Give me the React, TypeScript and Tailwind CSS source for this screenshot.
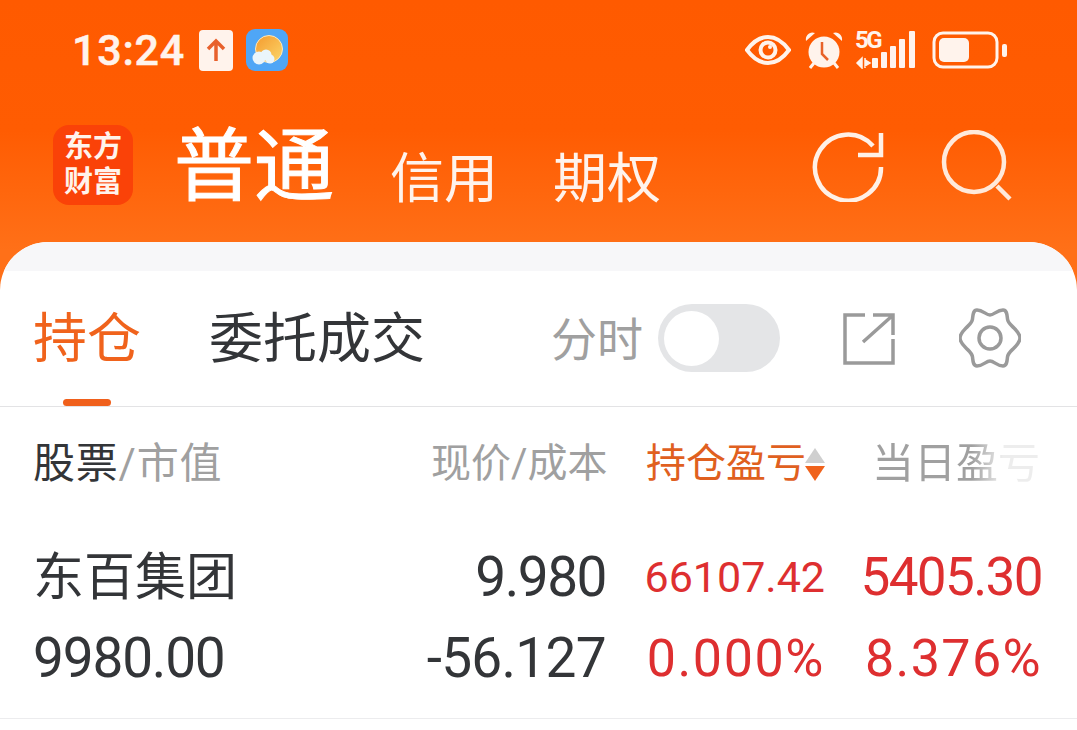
const cjk = "font-['Roboto','Noto_Sans_CJK_SC',sans-serif]"

function StatusBar() {
  return (
    <div className="flex h-[100px] items-center justify-between pl-[72px] pr-[69px] text-[#fff3ec]">
      <div className="flex items-center">
        <span className="w-[127px] text-[43px] leading-none font-medium tracking-[0.8px] [-webkit-text-stroke:0.5px_#fff3ec]">13:24</span>
        <svg width="34" height="41" viewBox="0 0 34 41">
          <rect width="34" height="41" rx="4" fill="#fff3ec" />
          <path d="M17 31V11M9 19l8-8 8 8" fill="none" stroke="#e8602c" strokeWidth="3.500" />
        </svg>
        <svg width="42" height="42" viewBox="0 0 42 42" className="ml-[13px]">
          <defs>
            <linearGradient id="sun" x1="0" y1="0" x2="1" y2="1">
              <stop offset="0" stopColor="#f59a2e" />
              <stop offset="1" stopColor="#fbd76a" />
            </linearGradient>
          </defs>
          <rect width="42" height="42" rx="9" fill="#4fa6f6" />
          <circle cx="23" cy="20" r="13.500" fill="url(#sun)" stroke="#fde9bf" strokeWidth="1" />
          <circle cx="13" cy="29" r="6.500" fill="#eaf5fb" />
          <circle cx="20" cy="26" r="5.500" fill="#eaf5fb" />
          <circle cx="24" cy="30" r="4.500" fill="#eaf5fb" />
        </svg>
      </div>
      <div className="flex items-center">
        <svg width="46" height="30" viewBox="0 0 46 30">
          <path d="M2 15C10 4 17 2 23 2s13 2 21 13c-8 11-15 13-21 13S10 26 2 15z" fill="none" stroke="#fff3ec" strokeWidth="4" />
          <circle cx="23" cy="15" r="7.500" fill="none" stroke="#fff3ec" strokeWidth="4" />
          <circle cx="25" cy="12" r="2" fill="#fff3ec" />
        </svg>
        <svg width="38" height="38" viewBox="0 0 38 38" className="ml-[14px]">
          <circle cx="19" cy="21" r="15.500" fill="#fff3ec" />
          <path d="M1 10C0 4 5 0 10 2zM37 10c1-6-4-10-9-8z" fill="#fff3ec" />
          <path d="M9 32l-4 5M29 32l4 5" stroke="#fff3ec" strokeWidth="3" />
          <path d="M17 11v12l6 6" fill="none" stroke="#e8622a" strokeWidth="2.500" />
        </svg>
        <div className="relative ml-[12px] h-[38px] w-[62px]">
          <span className="absolute top-[-4px] left-0 text-[24px] leading-[26px] font-bold tracking-[-2.5px]">5G</span>
          <svg width="62" height="38" viewBox="0 0 62 38">
            <path d="M7 27v10l-5-5zM10 27v10M10 29l5 3-5 3z" fill="#fff3ec" stroke="#fff3ec" strokeWidth="1.500" />
            <rect x="17" y="27" width="6" height="10" rx="1" fill="#fff3ec" />
            <rect x="26" y="21" width="6" height="16" rx="1" fill="#fff3ec" />
            <rect x="35" y="15" width="6" height="22" rx="1" fill="#fff3ec" />
            <rect x="44" y="8" width="6" height="29" rx="1" fill="#fff3ec" />
            <rect x="54" y="0" width="6" height="37" rx="1" fill="#fff3ec" />
          </svg>
        </div>
        <svg width="76" height="38" viewBox="0 0 76 38" className="ml-[15px]">
          <rect x="2" y="2" width="63" height="34" rx="9" fill="none" stroke="#fff3ec" strokeWidth="3" />
          <rect x="7" y="7" width="30" height="24" rx="5" fill="#fff3ec" />
          <rect x="70" y="13" width="5" height="13" rx="2" fill="#fff3ec" />
        </svg>
      </div>
    </div>
  )
}

function Header() {
  return (
    <div className="flex h-[142px] items-start pl-[53px]">
      <div className="mt-[25px] flex h-[80px] w-[80px] flex-col items-center justify-center rounded-[16px] bg-[#fa4208] text-[29px] leading-[35px] font-bold text-[#fff3ec]">
        <span>东方</span>
        <span>财富</span>
      </div>
      <span className="mt-[19px] ml-[41px] text-[80px] leading-[96px] text-white [-webkit-text-stroke:1px_white]">普通</span>
      <span className="mt-[45px] ml-[56px] text-[54px] leading-[70px] text-[#fff3ec]">信用</span>
      <span className="mt-[45px] ml-[55px] text-[54px] leading-[70px] text-[#fff3ec]">期权</span>
      <svg width="72" height="72" viewBox="0 0 72 72" className="mt-[30px] ml-[151px]" fill="none" stroke="#fff0e6" strokeWidth="4.500">
        <path d="M69 37A33 33 0 1 1 61 16" />
        <path d="M69 3V25H46" />
      </svg>
      <svg width="72" height="72" viewBox="0 0 72 72" className="mt-[30px] ml-[56px]" fill="none" stroke="#ffe9da" strokeWidth="4.500">
        <circle cx="34" cy="32" r="30" />
        <path d="M57 56l13 13" />
      </svg>
    </div>
  )
}

function Tabs() {
  return (
    <div className="relative flex h-[136px] items-center border-b border-[#e3e3e5] pl-[33px]">
      <span className="mt-[3px] text-[54px] leading-none text-[#f0631c]">持仓</span>
      <span className="absolute bottom-0 left-[63px] h-[7px] w-[48px] rounded-full bg-[#f0601c]" />
      <span className="mt-[3px] ml-[68px] text-[54px] leading-none text-[#333538]">委托成交</span>
      <span className="mt-[3px] ml-[126px] text-[46px] leading-none text-[#a0a0a0]">分时</span>
      <span className="mt-[-1px] ml-[15px] flex h-[68px] w-[122px] items-center rounded-full bg-[#e4e5e7] pl-[6px]">
        <span className="h-[55px] w-[55px] rounded-full bg-white" />
      </span>
      <svg width="52" height="52" viewBox="0 0 52 52" className="ml-[63px]" fill="none" stroke="#9a9a9a" strokeWidth="3.500">
        <path d="M22 2H2v48h48V26" />
        <path d="M20 29L49 3M30 2h20v20" />
      </svg>
      <svg width="62" height="62" viewBox="0 0 62 62" className="ml-[64px]" fill="none" stroke="#9a9a9a" strokeWidth="3.500">
        <path d="M31 7C35 7 38 2 44 2C48 2 48 7 48.500 11C49 15 52 17 55 20C59 24 61 27 61 30C61 33 59 36 55 40C52 43 49 45 48.500 49C48 53 48 58 44 58C38 58 35 53 31 53C27 53 24 58 18 58C14 58 14 53 13.500 49C13 45 10 43 7 40C3 36 1 33 1 30C1 27 3 24 7 20C10 17 13 15 13.500 11C14 7 14 2 18 2C24 2 27 7 31 7Z" />
        <circle cx="31" cy="30" r="11" />
      </svg>
    </div>
  )
}

function TableHead() {
  return (
    <div className="flex h-[114px] items-center leading-none">
      <span className="ml-[33px] w-[398px] text-[42px] tracking-[0.8px] text-[#333538]">股票<span className="text-[#a0a0a0]">/市值</span></span>
      <span className="w-[215px] whitespace-nowrap text-[40px] text-[#a0a0a0]">现价/成本</span>
      <span className="w-[160px] whitespace-nowrap text-[40px] text-[#e0601f]">持仓盈亏</span>
      <span className="ml-[-2px] flex w-[68px] flex-col gap-[3px]">
        <svg width="22" height="15" viewBox="0 0 22 15"><path d="M11 0l10 15H1z" fill="#cfcfcf" /></svg>
        <svg width="22" height="15" viewBox="0 0 22 15"><path d="M11 15L1 0h20z" fill="#f0631c" /></svg>
      </span>
      <span className="w-[172px] whitespace-nowrap bg-[linear-gradient(90deg,#a0a0a0_58%,#ededed_76%)] bg-clip-text text-[42px] text-transparent">当日盈亏</span>
    </div>
  )
}

function Row() {
  return (
    <div className="flex flex-col border-b border-[#ececee] pb-[19px]">
      <div className="flex h-[81px] items-center">
        <span className="ml-[33px] w-[321px] text-[51px] leading-none text-[#333538]">东百集团</span>
        <span className="w-[252px] text-right text-[55px] leading-none tracking-[-1.500px] text-[#333538]">9.980</span>
        <span className="w-[219px] text-right text-[43px] leading-none text-[#de2f30]">66107.42</span>
        <span className="w-[217px] text-right text-[53px] leading-none tracking-[-1.600px] text-[#de2f30]">5405.30</span>
      </div>
      <div className="flex h-[81px] items-center">
        <span className="ml-[33px] w-[321px] text-[55px] leading-none tracking-[-1.200px] text-[#333538]">9980.00</span>
        <span className="w-[252px] text-right text-[55px] leading-none tracking-[-0.700px] text-[#333538]">-56.127</span>
        <span className="w-[219px] text-right text-[52px] leading-none tracking-[1.600px] text-[#de2f30]">0.000%</span>
        <span className="w-[217px] text-right text-[52px] leading-none tracking-[1.400px] text-[#de2f30]">8.376%</span>
      </div>
    </div>
  )
}

export default function App() {
  return (
    <div className={`h-[730px] w-[1077px] overflow-hidden bg-[linear-gradient(180deg,#ff5a00_0%,#ff5c02_130px,#ff7018_250px)] ${cjk}`}>
      <StatusBar />
      <Header />
      <div className="h-[488px] overflow-hidden rounded-t-[48px] bg-white">
        <div className="h-[29px] bg-[#f7f7f9]" />
        <Tabs />
        <TableHead />
        <div className="h-[16px]" />
        <Row />
      </div>
    </div>
  )
}
